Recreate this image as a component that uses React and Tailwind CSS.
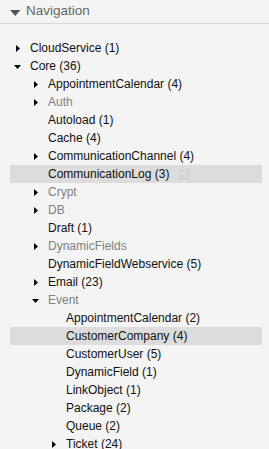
import React from 'react';

const items = [
  { label: 'CloudService (1)', level: 0, toggle: 'closed' },
  { label: 'Core (36)', level: 0, toggle: 'open' },
  { label: 'AppointmentCalendar (4)', level: 1, toggle: 'closed' },
  { label: 'Auth', level: 1, toggle: 'closed', muted: true },
  { label: 'Autoload (1)', level: 1 },
  { label: 'Cache (4)', level: 1 },
  { label: 'CommunicationChannel (4)', level: 1, toggle: 'closed' },
  { label: 'CommunicationLog (3)', level: 1, active: true, link: true },
  { label: 'Crypt', level: 1, toggle: 'closed', muted: true },
  { label: 'DB', level: 1, toggle: 'closed', muted: true },
  { label: 'Draft (1)', level: 1 },
  { label: 'DynamicFields', level: 1, toggle: 'closed', muted: true },
  { label: 'DynamicFieldWebservice (5)', level: 1 },
  { label: 'Email (23)', level: 1, toggle: 'closed' },
  { label: 'Event', level: 1, toggle: 'open', muted: true },
  { label: 'AppointmentCalendar (2)', level: 2 },
  { label: 'CustomerCompany (4)', level: 2, active: true },
  { label: 'CustomerUser (5)', level: 2 },
  { label: 'DynamicField (1)', level: 2 },
  { label: 'LinkObject (1)', level: 2 },
  { label: 'Package (2)', level: 2 },
  { label: 'Queue (2)', level: 2 },
  { label: 'Ticket (24)', level: 2, toggle: 'closed' },
];

const indents = ['pl-0', 'pl-[18px]', 'pl-[36px]'];

const Toggle = ({ state }) => (
  <svg width="20" height="18" viewBox="0 0 20 18" className="shrink-0">
    {state === 'closed' && <polygon points="6,6 10,9.5 6,13" fill="#000" />}
    {state === 'open' && <polygon points="4,8 11,8 7.5,12" fill="#000" />}
  </svg>
);

const ExternalLink = () => (
  <svg width="11" height="11" viewBox="0 0 11 11" className="ml-[10px] shrink-0">
    <path d="M5 2H1.5v7.5H9V6" fill="none" stroke="#cfcfcf" strokeWidth="1.4" />
    <path d="M6.5 0.8h3.7v3.7M10 1L5 6" fill="none" stroke="#cfcfcf" strokeWidth="1.4" />
  </svg>
);

const App = () => {
  return (
    <div className="w-[269px] h-[449px] overflow-hidden bg-[#f4f4f4] font-['Liberation_Sans',Arial,sans-serif] text-[12px]">
      <div className="h-[24px] flex items-center pl-[10px] border-b border-[#d9d9d9] text-[#666]">
        <svg width="11" height="18" viewBox="0 0 11 18" className="shrink-0">
          <polygon points="0,7 10.5,7 5.25,13" fill="#555" />
        </svg>
        <span className="ml-[5px] text-[13.5px] leading-[18px] -mt-[2px]">Navigation</span>
      </div>
      <ul className="pt-[15px] pl-[10px] pr-[7px]">
        {items.map((item, i) => (
          <li
            key={i}
            className={`h-[18px] leading-[18px] flex items-center ${indents[item.level]} ${item.active ? 'bg-[#dcdcdc]' : ''}`}
          >
            <Toggle state={item.toggle} />
            <span className={`whitespace-nowrap ${item.muted ? 'text-[#808080]' : 'text-[#111]'}`}>{item.label}</span>
            {item.link && <ExternalLink />}
          </li>
        ))}
      </ul>
    </div>
  );
};

export default App;
